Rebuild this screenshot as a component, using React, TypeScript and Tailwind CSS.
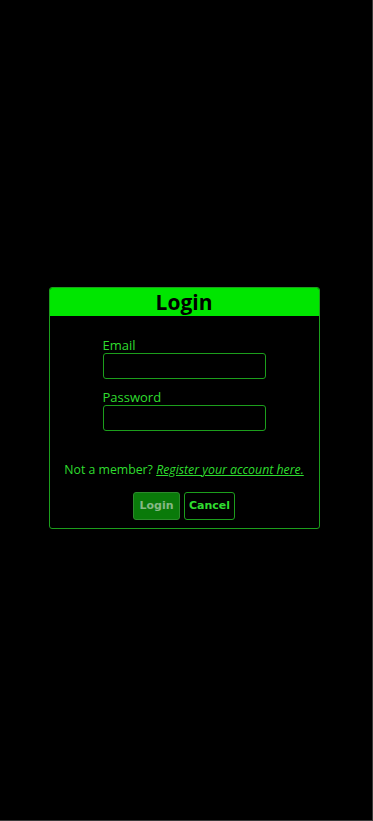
export default function App() {
    return (
        <div className="min-h-[821px] w-full bg-black flex items-center justify-center border-r border-b border-[#3a3a3a] font-['Open_Sans','Noto_Sans',sans-serif]">
            <div className="w-[271px] mt-[-4px] mr-[4px] rounded-[3px] border border-[#1c9e1c] overflow-hidden">
                <div className="h-[28px] bg-[#00e600] flex items-center justify-center">
                    <h1 className="text-[21px] leading-none font-bold text-black">Login</h1>
                </div>

                <div className="px-[53px] pt-[21px]">
                    <label className="block text-[13px] leading-[16px] text-[#2fdd2f]">Email</label>
                    <input type="email" className="block w-[163px] h-[26px] rounded-[3px] border border-[#1c9e1c] bg-black" />

                    <label className="block mt-[10px] text-[13px] leading-[16px] text-[#2fdd2f]">Password</label>
                    <input type="password" className="block w-[163px] h-[26px] rounded-[3px] border border-[#1c9e1c] bg-black" />
                </div>

                <p className="mt-[31px] text-center text-[12.3px] leading-[16px] text-[#2fdd2f]">
                    Not a member? <a href="#" className="italic underline">Register your account here.</a>
                </p>

                <div className="mt-[14px] mb-[8px] flex justify-center gap-[4px] font-['DejaVu_Sans',sans-serif]">
                    <button className="h-[28px] w-[47px] rounded-[3px] border border-[#2c8a2c] bg-[#0a7a0a] text-[11px] font-bold text-[#86b886]">Login</button>
                    <button className="h-[28px] w-[51px] rounded-[3px] border border-[#1c9e1c] bg-black text-[11px] font-bold text-[#2fdd2f]">Cancel</button>
                </div>
            </div>
        </div>
    );
}
